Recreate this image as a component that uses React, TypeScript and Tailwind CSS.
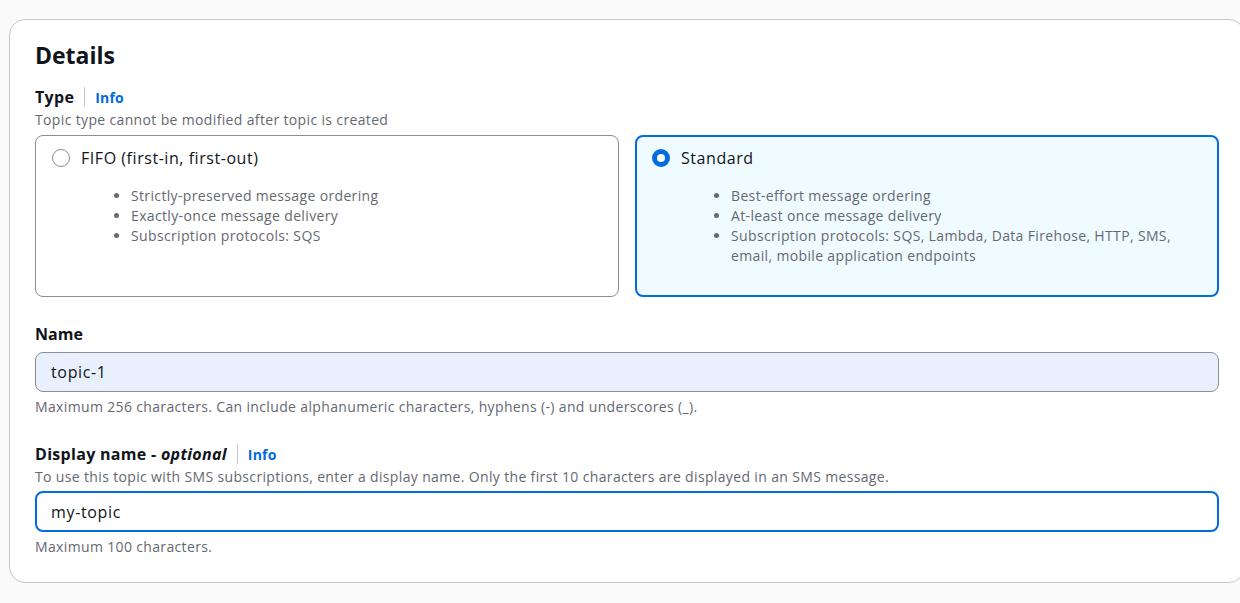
import React from 'react';

const font = { fontFamily: '"Open Sans", "Noto Sans", Arial, sans-serif' };

interface TileProps {
  title: string;
  bullets: string[];
  selected: boolean;
}

const Radio: React.FC<{ checked: boolean }> = ({ checked }) =>
  checked ? (
    <span className="w-[18px] h-[18px] rounded-full bg-[#006ce0] flex items-center justify-center shrink-0">
      <span className="w-[8px] h-[8px] rounded-full bg-white" />
    </span>
  ) : (
    <span className="w-[18px] h-[18px] rounded-full border-[1.5px] border-[#8c8c94] bg-white shrink-0" />
  );

const Tile: React.FC<TileProps> = ({ title, bullets, selected }) => (
  <div
    className={`h-[162px] rounded-[8px] ${
      selected
        ? 'border-2 border-[#006ce0] bg-[#f0fbff] pt-[10px] pl-[15px] pr-4'
        : 'border border-[#8c8c94] bg-white pt-[11px] pl-[16px] pr-4'
    }`}
  >
    <div className="flex items-center gap-[11px] h-[22px]">
      <Radio checked={selected} />
      <span className="text-[16px] leading-[22px] tracking-[0.55px] text-[#0f141a]">{title}</span>
    </div>
    <ul className="list-disc mt-[17px] pl-[79px] text-[14px] leading-[20px] tracking-[0.35px] text-[#656871] marker:text-[#656871]">
      {bullets.map((b) => (
        <li key={b}>{b}</li>
      ))}
    </ul>
  </div>
);

const InfoLink = () => (
  <>
    <span className="w-px h-[20px] bg-[#c6c6cd] mx-[10px]" />
    <span className="text-[14px] font-bold tracking-[0.2px] text-[#006ce0]">Info</span>
  </>
);

const hint = 'text-[14px] leading-[20px] tracking-[0.35px] text-[#656871]';
const label = 'text-[16px] leading-[22px] font-bold text-[#0f141a]';

export default function App() {
  return (
    <div className="w-full h-[603px] overflow-hidden bg-[#fafafa] pt-[19px] pl-[9px]" style={font}>
      <div className="w-[1236px] bg-white border border-[#c6c6cd] rounded-2xl pt-5 pb-[25px] px-[25px]">
        <h2 className="text-[23px] leading-[30px] font-bold text-[#0f141a]">Details</h2>

        <div className="mt-4 flex items-center h-[22px]">
          <span className={`${label} tracking-[0.3px]`}>Type</span>
          <InfoLink />
        </div>
        <p className={`mt-[2px] ${hint}`}>Topic type cannot be modified after topic is created</p>

        <div className="mt-[5px] grid grid-cols-2 gap-4">
          <Tile
            title="FIFO (first-in, first-out)"
            selected={false}
            bullets={[
              'Strictly-preserved message ordering',
              'Exactly-once message delivery',
              'Subscription protocols: SQS',
            ]}
          />
          <Tile
            title="Standard"
            selected
            bullets={[
              'Best-effort message ordering',
              'At-least once message delivery',
              'Subscription protocols: SQS, Lambda, Data Firehose, HTTP, SMS, email, mobile application endpoints',
            ]}
          />
        </div>

        <div className={`mt-[26px] ${label}`}>Name</div>
        <div className="mt-[7px] h-[40px] rounded-[8px] border border-[#8c8c94] bg-[#e8f0fe] flex items-center px-[15px] text-[16px] tracking-[0.65px] text-[#0f141a]">
          topic-1
        </div>
        <p className={`mt-[5px] ${hint}`}>
          Maximum 256 characters. Can include alphanumeric characters, hyphens (-) and underscores (_).
        </p>

        <div className="mt-[26px] flex items-center h-[22px]">
          <span className={`${label} tracking-[0.3px]`}>
            Display name - <i>optional</i>
          </span>
          <InfoLink />
        </div>
        <p className={`mt-[2px] ${hint}`}>
          To use this topic with SMS subscriptions, enter a display name. Only the first 10 characters are displayed in an SMS message.
        </p>
        <div className="mt-[4px] h-[41px] rounded-[8px] border-2 border-[#006ce0] bg-white flex items-center px-[14px] text-[16px] tracking-[0.65px] text-[#0f141a]">
          my-topic
        </div>
        <p className={`mt-[5px] ${hint}`}>Maximum 100 characters.</p>
      </div>
    </div>
  );
}
